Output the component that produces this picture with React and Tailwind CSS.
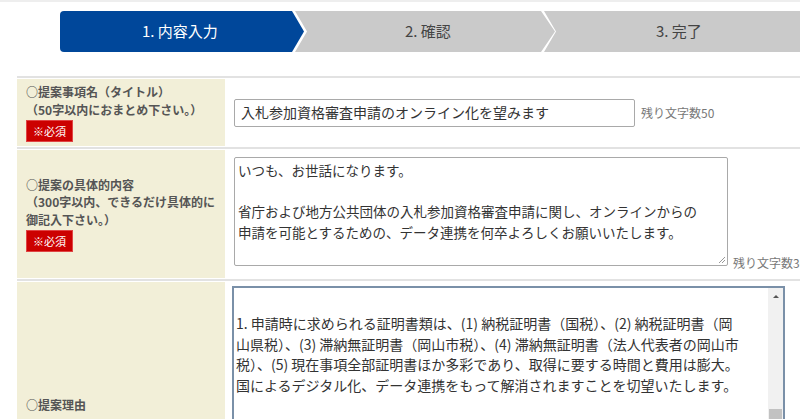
// App.jsx — 提案入力フォーム（ステップ1：内容入力）

function Steps() {
  return (
    <div className="flex h-[41px] ml-[60px] mt-[9px] text-[15px]">
      <div className="w-[244px] flex-shrink-0 flex items-center pl-[82px] bg-[#00479a] text-white rounded-l-[4px] [clip-path:polygon(0_0,232px_0,244px_50%,232px_100%,0_100%)]">
        1. 内容入力
      </div>
      <div className="w-[260px] flex-shrink-0 -ml-[9px] flex items-center pl-[110px] bg-[#cacaca] text-[#444] [clip-path:polygon(0_0,246px_0,260px_50%,246px_100%,0_100%,12px_50%)]">
        2. 確認
      </div>
      <div className="w-[262px] flex-shrink-0 -ml-[11px] flex items-center pl-[112px] bg-[#cacaca] text-[#444] [clip-path:polygon(0_0,100%_0,100%_100%,0_100%,12px_50%)]">
        3. 完了
      </div>
    </div>
  )
}

function Required() {
  return (
    <span className="inline-block mt-[2px] bg-[#cc0000] text-white text-[11px] font-normal leading-[20px] px-[6px] border border-[#e04444]">
      ※必須
    </span>
  )
}

function Label({ lines, required }) {
  return (
    <div className="w-[208px] flex-shrink-0 bg-[#f2efd8] flex flex-col justify-center pl-[9px] text-[12px] font-bold text-[#555] leading-[17.5px]">
      {lines.map(l => <div key={l}>{l}</div>)}
      {required && <div><Required /></div>}
    </div>
  )
}

function Row({ children, className = '' }) {
  return (
    <div className={`border-t-2 border-[#e2e2e2] pt-[1px] pb-[1px] flex ${className}`}>
      {children}
    </div>
  )
}

export default function App() {
  return (
    <div className="w-[800px] h-[419px] overflow-hidden bg-white font-['Noto_Sans_CJK_JP','Noto_Sans',sans-serif] text-[#333]">
      <div className="h-[2px] bg-[#eeeeee]" />
      <Steps />

      <div className="w-[900px] ml-[17px] mt-[24px]">

        {/* 提案事項名 */}
        <Row className="h-[71px]">
          <Label lines={['○提案事項名（タイトル）', '（50字以内におまとめ下さい。）']} required />
          <div className="flex items-center pl-[9px]">
            <div className="w-[401px] h-[28px] border border-[#a9a9a9] rounded-[2px] px-[6px] flex items-center text-[14px] text-[#333]">
              入札参加資格審査申請のオンライン化を望みます
            </div>
            <span className="ml-[6px] text-[12px] text-[#777]">残り文字数50</span>
          </div>
        </Row>

        {/* 提案の具体的内容 */}
        <Row className="h-[132px]">
          <Label lines={['○提案の具体的内容', '（300字以内、できるだけ具体的に', '御記入下さい。）']} required />
          <div className="flex items-end pl-[9px] pt-[7px] pb-[12px]">
            <div className="relative w-[494px] h-[109px] self-start border border-[#a9a9a9] rounded-[2px] pl-[3px] pt-[2px] text-[13.5px] leading-[20.6px] text-[#333]">
              <div>いつも、お世話になります。</div>
              <div>&nbsp;</div>
              <div>省庁および地方公共団体の入札参加資格審査申請に関し、オンラインからの</div>
              <div>申請を可能とするための、データ連携を何卒よろしくお願いいたします。</div>
              <svg className="absolute right-[1px] bottom-[1px]" width="9" height="9" viewBox="0 0 9 9">
                <path d="M8 2 L2 8 M8 5 L5 8" stroke="#999" strokeWidth="1" />
              </svg>
            </div>
            <span className="ml-[5px] -mb-[6px] text-[12px] text-[#777] whitespace-nowrap">残り文字数300</span>
          </div>
        </Row>

        {/* 提案理由 */}
        <Row className="h-[250px]">
          <div className="w-[208px] flex-shrink-0 bg-[#f2efd8] flex items-center pl-[9px] text-[12px] font-bold text-[#555]">
            ○提案理由
          </div>
          <div className="pl-[7px] pt-[4px]">
            <div className="w-[553px] h-[240px] border-2 border-[#7a90a8] flex">
              <div className="flex-1 pl-[2px] pt-[5px] text-[14px] leading-[20.4px] text-[#333] whitespace-nowrap">
                <div>&nbsp;</div>
                <div>1. 申請時に求められる証明書類は、(1) 納税証明書（国税）、(2) 納税証明書（岡</div>
                <div>山県税）、(3) 滞納無証明書（岡山市税）、(4) 滞納無証明書（法人代表者の岡山市</div>
                <div>税）、(5) 現在事項全部証明書ほか多彩であり、取得に要する時間と費用は膨大。</div>
                <div>国によるデジタル化、データ連携をもって解消されますことを切望いたします。</div>
              </div>
              <div className="w-[15px] bg-[#f1f1f1] flex flex-col items-center">
                <div className="mt-[7px] w-0 h-0 border-l-[3px] border-r-[3px] border-b-[3px] border-l-transparent border-r-transparent border-b-[#555]" />
                <div className="mt-[111px] w-[13px] h-[40px] bg-[#c2c2c2]" />
              </div>
            </div>
          </div>
        </Row>

      </div>
    </div>
  )
}
